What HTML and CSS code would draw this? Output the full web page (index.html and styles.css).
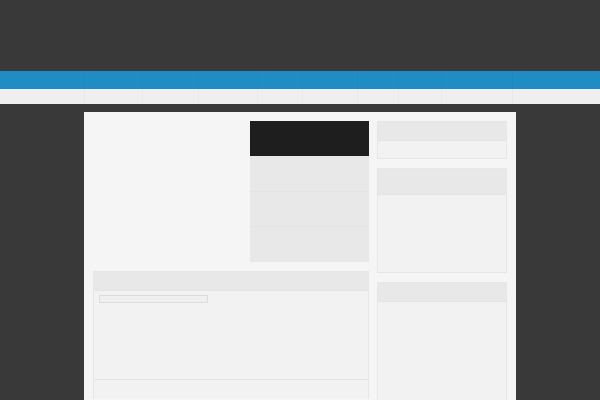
FILE: index.html
```html
<!DOCTYPE html>
<html>
<head>
<meta charset="utf-8">
<link rel="stylesheet" href="styles.css">
</head>
<body>
<div class="top"></div>
<div class="nav">
  <div class="bar">
    <span class="item w58"></span><span class="item w56"></span><span class="item w59"></span><span class="item w45"></span><span class="item w55"></span><span class="item w41"></span><span class="item w43"></span><span class="item w71"></span><span class="item last"></span>
  </div>
</div>
<div class="subnav">
  <div class="bar">
    <span class="item w58"></span><span class="item w56"></span><span class="item w59"></span><span class="item w45"></span><span class="item w55"></span><span class="item w41"></span><span class="item w43"></span><span class="item w71"></span><span class="item last"></span>
  </div>
</div>
<div class="page">
  <div class="main">
    <div class="hero">
      <div class="blank"></div>
      <div class="feature">
        <div class="dark"></div>
        <div class="rows">
          <div class="row"></div>
          <div class="row"></div>
          <div class="row"></div>
        </div>
      </div>
    </div>
    <div class="panel big open">
      <div class="phead"></div>
      <div class="pbody">
        <div class="field"></div>
      </div>
      <div class="pfoot"></div>
    </div>
  </div>
  <div class="side">
    <div class="panel p1">
      <div class="phead"></div>
      <div class="pbody"></div>
    </div>
    <div class="panel p2">
      <div class="phead tall"></div>
      <div class="pbody"></div>
    </div>
    <div class="panel p3 open">
      <div class="phead"></div>
      <div class="pbody"></div>
    </div>
  </div>
</div>
</body>
</html>
```

FILE: styles.css
```css
html, body {
  margin: 0;
  padding: 0;
  background: #393939;
  height: 400px;
  overflow: hidden;
  font-family: "Liberation Sans", Arial, sans-serif;
}
.top {
  height: 71px;
}
.nav {
  height: 18px;
  background: #1f8cc4;
}
.subnav {
  height: 15px;
  background: #efefef;
}
.bar {
  width: 432px;
  margin: 0 auto;
  height: 100%;
  display: flex;
}
.item {
  display: block;
  height: 100%;
  box-sizing: border-box;
  border-left: 1px solid rgba(0, 0, 0, 0.025);
}
.subnav .item {
  border-left: 1px solid #e9e9e9;
}
.w58 { width: 58px; }
.w56 { width: 56px; }
.w59 { width: 59px; }
.w45 { width: 45px; }
.w55 { width: 55px; }
.w41 { width: 41px; }
.w43 { width: 43px; }
.w71 { width: 71px; }
.last { flex: 1; }
.page {
  width: 414px;
  margin: 8px auto 0;
  padding: 9px 9px 0;
  background: #f5f5f5;
  height: 279px;
  display: grid;
  grid-template-columns: 276px 130px;
  column-gap: 8px;
  align-items: start;
}
.hero {
  display: flex;
  height: 141px;
}
.blank {
  width: 157px;
}
.feature {
  width: 119px;
  display: flex;
  flex-direction: column;
}
.dark {
  height: 35px;
  background: #1e1e1e;
}
.rows {
  flex: 1;
  background: #e8e8e8;
  display: flex;
  flex-direction: column;
}
.row {
  flex: 1;
  border-bottom: 1px solid #e4e4e4;
}
.row:last-child {
  border-bottom: none;
}
.panel {
  background: #f2f2f2;
  border: 1px solid #e6e6e6;
  box-sizing: border-box;
}
.panel.open {
  border-bottom: none;
}
.phead {
  height: 18px;
  background: #e8e8e8;
  border-bottom: 1px solid #e4e4e4;
}
.phead.tall {
  height: 25px;
}
.big {
  margin-top: 9px;
}
.big .pbody {
  height: 89px;
  padding: 4px 0 0 5px;
  box-sizing: border-box;
  border-bottom: 1px solid #e6e6e6;
}
.field {
  width: 109px;
  height: 8px;
  box-sizing: border-box;
  border: 1px solid #dcdcdc;
  background: #efefef;
}
.pfoot {
  height: 19px;
}
.side {
  display: flex;
  flex-direction: column;
  gap: 9px;
}
.p1 .pbody {
  height: 17px;
}
.p2 .pbody {
  height: 77px;
}
.p3 .pbody {
  height: 98px;
}
```
